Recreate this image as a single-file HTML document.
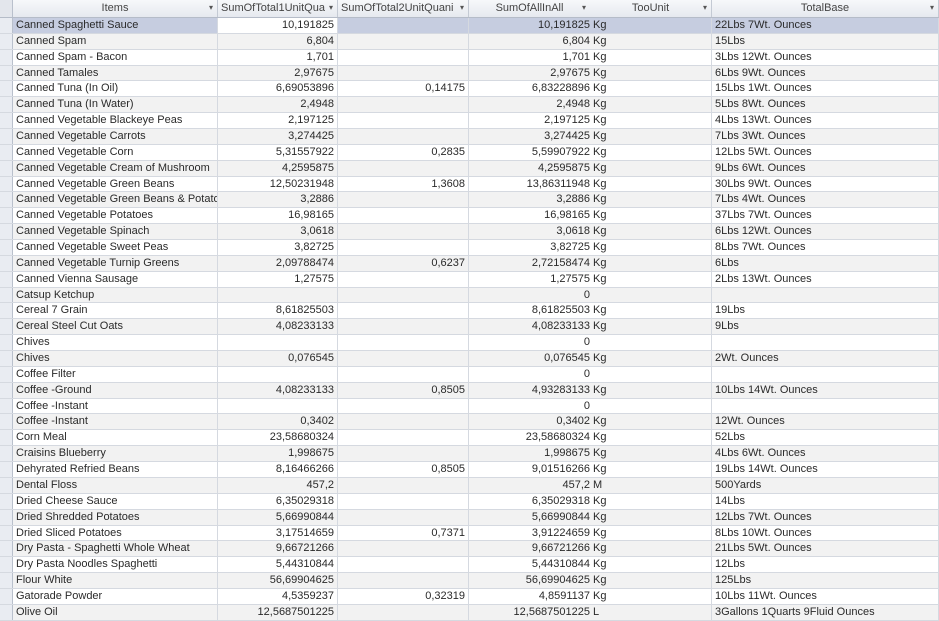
<!DOCTYPE html>
<html><head><meta charset="utf-8"><style>
body{margin:0;width:939px;height:620px;overflow:hidden;background:#fff;font-family:"Liberation Sans",sans-serif;font-size:11px;color:#2a2a2a}
.r{display:flex;height:15.87px;line-height:15px;box-sizing:border-box;border-bottom:1px solid #d5d9e0}
.r.g{background:#f2f2f2}
.r.s{background:#c6cde0}
.r div{box-sizing:border-box;border-right:1px solid #d5d9e0;overflow:hidden;white-space:nowrap;padding:0 3px}
.c0{width:13px;background:#e9ecf2;border-right:1px solid #b9c0cc!important}
.c1{width:205px}.c2{width:120px;text-align:right}.c3{width:131px;text-align:right}.c4{width:121px;text-align:right;padding-right:0!important;border-right:none!important}.c5{width:122px}.r .c5{padding-left:3px}.c6{width:227px}
.h{display:flex;height:17px;line-height:16px;background:linear-gradient(#f7f8fa,#e6e9ef);border-bottom:1px solid #b5bcc8;color:#444}
.h div{box-sizing:border-box;border-right:1px solid #c4cad4;text-align:center;position:relative;white-space:nowrap;overflow:hidden}
.h div span{position:absolute;right:4px;font-size:8px;color:#555}
.cur{background:#fff}
</style></head><body>
<div class="h"><div class="c0" style="background:#e3e6ec"></div><div class="c1">Items<span>▾</span></div><div class="c2" style="text-align:left;padding-left:3px">SumOfTotal1UnitQua<span>▾</span></div><div class="c3" style="text-align:left;padding-left:3px">SumOfTotal2UnitQuani<span>▾</span></div><div class="c4" style="width:121px;border-right:1px solid #c4cad4">SumOfAllInAll<span>▾</span></div><div class="c5">TooUnit<span>▾</span></div><div class="c6">TotalBase<span>▾</span></div></div>
<div id="b"></div>
<script>
var d=[["Canned Spaghetti Sauce","10,191825","","10,191825","Kg","22Lbs 7Wt. Ounces"],
["Canned Spam","6,804","","6,804","Kg","15Lbs"],
["Canned Spam - Bacon","1,701","","1,701","Kg","3Lbs 12Wt. Ounces"],
["Canned Tamales","2,97675","","2,97675","Kg","6Lbs 9Wt. Ounces"],
["Canned Tuna (In Oil)","6,69053896","0,14175","6,83228896","Kg","15Lbs 1Wt. Ounces"],
["Canned Tuna (In Water)","2,4948","","2,4948","Kg","5Lbs 8Wt. Ounces"],
["Canned Vegetable Blackeye Peas","2,197125","","2,197125","Kg","4Lbs 13Wt. Ounces"],
["Canned Vegetable Carrots","3,274425","","3,274425","Kg","7Lbs 3Wt. Ounces"],
["Canned Vegetable Corn","5,31557922","0,2835","5,59907922","Kg","12Lbs 5Wt. Ounces"],
["Canned Vegetable Cream of Mushroom","4,2595875","","4,2595875","Kg","9Lbs 6Wt. Ounces"],
["Canned Vegetable Green Beans","12,50231948","1,3608","13,86311948","Kg","30Lbs 9Wt. Ounces"],
["Canned Vegetable Green Beans & Potatoes","3,2886","","3,2886","Kg","7Lbs 4Wt. Ounces"],
["Canned Vegetable Potatoes","16,98165","","16,98165","Kg","37Lbs 7Wt. Ounces"],
["Canned Vegetable Spinach","3,0618","","3,0618","Kg","6Lbs 12Wt. Ounces"],
["Canned Vegetable Sweet Peas","3,82725","","3,82725","Kg","8Lbs 7Wt. Ounces"],
["Canned Vegetable Turnip Greens","2,09788474","0,6237","2,72158474","Kg","6Lbs"],
["Canned Vienna Sausage","1,27575","","1,27575","Kg","2Lbs 13Wt. Ounces"],
["Catsup Ketchup","","","0","",""],
["Cereal 7 Grain","8,61825503","","8,61825503","Kg","19Lbs"],
["Cereal Steel Cut Oats","4,08233133","","4,08233133","Kg","9Lbs"],
["Chives","","","0","",""],
["Chives","0,076545","","0,076545","Kg","2Wt. Ounces"],
["Coffee Filter","","","0","",""],
["Coffee -Ground","4,08233133","0,8505","4,93283133","Kg","10Lbs 14Wt. Ounces"],
["Coffee -Instant","","","0","",""],
["Coffee -Instant","0,3402","","0,3402","Kg","12Wt. Ounces"],
["Corn Meal","23,58680324","","23,58680324","Kg","52Lbs"],
["Craisins Blueberry","1,998675","","1,998675","Kg","4Lbs 6Wt. Ounces"],
["Dehyrated Refried Beans","8,16466266","0,8505","9,01516266","Kg","19Lbs 14Wt. Ounces"],
["Dental Floss","457,2","","457,2","M","500Yards"],
["Dried Cheese Sauce","6,35029318","","6,35029318","Kg","14Lbs"],
["Dried Shredded Potatoes","5,66990844","","5,66990844","Kg","12Lbs 7Wt. Ounces"],
["Dried Sliced Potatoes","3,17514659","0,7371","3,91224659","Kg","8Lbs 10Wt. Ounces"],
["Dry Pasta - Spaghetti Whole Wheat","9,66721266","","9,66721266","Kg","21Lbs 5Wt. Ounces"],
["Dry Pasta Noodles Spaghetti","5,44310844","","5,44310844","Kg","12Lbs"],
["Flour White","56,69904625","","56,69904625","Kg","125Lbs"],
["Gatorade Powder","4,5359237","0,32319","4,8591137","Kg","10Lbs 11Wt. Ounces"],
["Olive Oil","12,5687501225","","12,5687501225","L","3Gallons 1Quarts 9Fluid Ounces"]];
var h="";d.forEach(function(r,i){h+='<div class="r'+(i==0?' s':(i%2?' g':''))+'"><div class="c0"></div><div class="c1">'+r[0].replace('&','&amp;')+'</div><div class="c2'+(i==0?' cur':'')+'">'+r[1]+'</div><div class="c3">'+r[2]+'</div><div class="c4">'+r[3]+'</div><div class="c5">'+r[4]+'</div><div class="c6">'+r[5]+'</div></div>';});
document.getElementById("b").innerHTML=h;
</script>
</body></html>
